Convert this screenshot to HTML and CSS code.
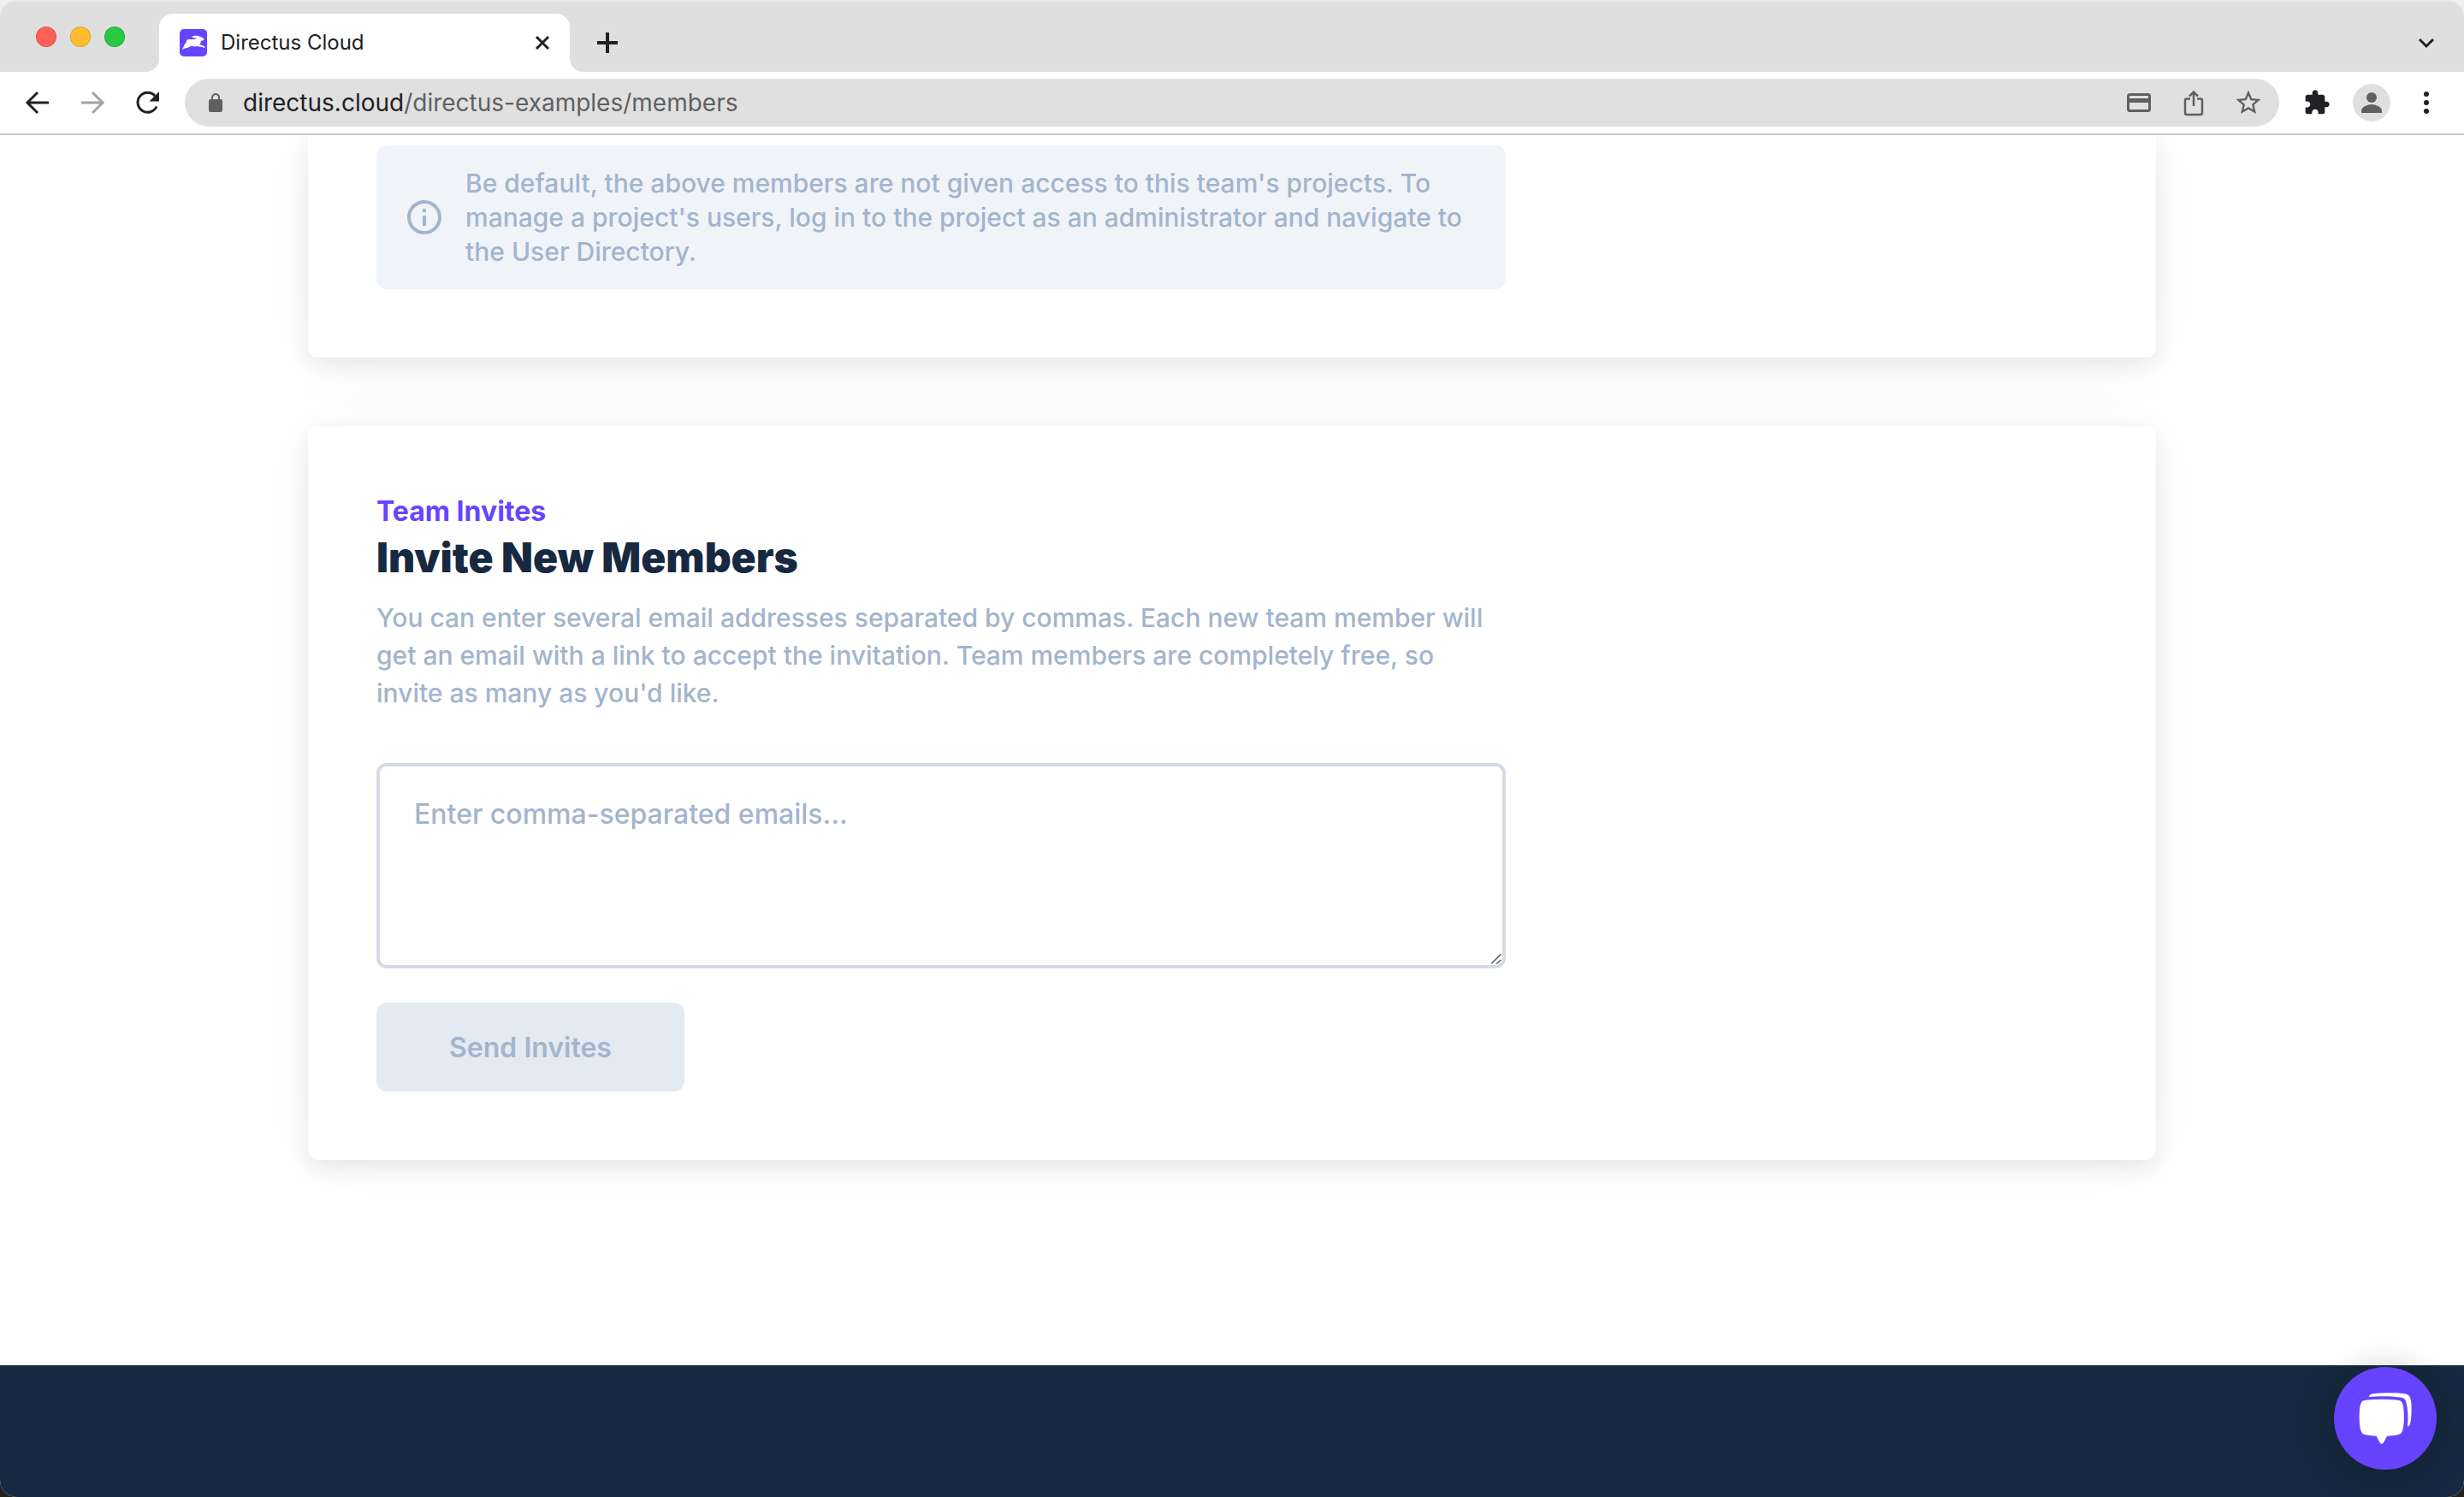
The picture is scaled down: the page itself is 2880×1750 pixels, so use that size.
FILE: index.html
```html
<!DOCTYPE html>
<html lang="en">
<head>
<meta charset="utf-8">
<title>Directus Cloud</title>
<meta name="viewport" content="width=device-width, initial-scale=1">
<link rel="stylesheet" href="styles.css">
</head>
<body>
<div class="window">
  <header class="browser">
    <div class="tabstrip">
      <div class="lights">
        <span class="light light-close"></span>
        <span class="light light-min"></span>
        <span class="light light-max"></span>
      </div>
      <div class="tab">
        <svg class="favicon" viewBox="0 0 32 32" aria-hidden="true">
          <rect width="32" height="32" rx="5" fill="#6644ff"/>
          <path fill="#fff" d="M14 9c3-2 8-1.500 11 .3 1.500.6 3 1.200 3.600 2.700-.6 1.300-2 1.700-3.600 1.800-.2 1.500-.8 3-1.600 4.200 1.500.6 3.600 1 5.400 2.300.8.600.6 1.500 0 1.900-2-1.500-4.500-1.700-7.300-1.900l-1.800-.3c-1.600.8-3.600.2-5.200-.3-1.700-.2-3.200 1-4.700 2-2 .6-3.800.6-5.300 1.400-.4.600-1 1.100-1.700.8l.4-1.200c1.600-1.500 1.800-3.600 3-5.400.8-1.100 1.800-1.800 1.700-3.300l.6-1.500c2.600-1 5.500-.2 8-.5 1.300-.1 2.400-.6 3.500-1.300-2-.4-4.500-.4-6-1.700z"/>
        </svg>
        <span class="tab-title">Directus Cloud</span>
        <button class="icon-button" type="button" aria-label="Close tab">
          <svg viewBox="0 0 32 32"><path d="M9 9l14 14M23 9L9 23" fill="none" stroke="currentColor" stroke-width="3"/></svg>
        </button>
      </div>
      <button class="icon-button new-tab" type="button" aria-label="New tab">
        <svg viewBox="0 0 32 32"><path d="M16 4v24M4 16h24" fill="none" stroke="currentColor" stroke-width="4"/></svg>
      </button>
      <button class="icon-button tab-search" type="button" aria-label="Search tabs">
        <svg viewBox="0 0 32 32"><path d="M8 12l8 8 8-8" fill="none" stroke="currentColor" stroke-width="3"/></svg>
      </button>
    </div>
    <nav class="toolbar" aria-label="Browser">
      <div class="nav-buttons">
        <button class="icon-button" type="button" aria-label="Back">
          <svg viewBox="0 0 32 32"><path d="M29 16H5M16 4L4 16l12 12" fill="none" stroke="currentColor" stroke-width="3"/></svg>
        </button>
        <button class="icon-button" type="button" aria-label="Forward" disabled>
          <svg viewBox="0 0 32 32"><path d="M3 16h24M16 4l12 12-12 12" fill="none" stroke="currentColor" stroke-width="3"/></svg>
        </button>
        <button class="icon-button" type="button" aria-label="Reload">
          <svg viewBox="0 0 32 32"><path d="M27 20.500A11.500 11.500 0 1 1 25 8" fill="none" stroke="currentColor" stroke-width="3"/><path d="M30 3v11.500H18.500z" fill="currentColor"/></svg>
        </button>
      </div>
      <div class="address">
        <svg class="lock" viewBox="0 0 16 22" aria-hidden="true"><rect y="7" width="16" height="15" rx="2" fill="currentColor"/><path d="M4 8V5a4 4 0 0 1 8 0v3" fill="none" stroke="currentColor" stroke-width="2"/></svg>
        <div class="url" role="textbox" aria-label="Address"><span class="host">directus.cloud</span>/directus-examples/members</div>
        <div class="address-actions">
          <button class="icon-button" type="button" aria-label="Payment methods">
            <svg viewBox="0 0 32 32"><rect x="3.500" y="6.500" width="25" height="19" rx="2" fill="none" stroke="currentColor" stroke-width="3"/><path d="M3 11h26v5H3z" fill="currentColor"/></svg>
          </button>
          <button class="icon-button" type="button" aria-label="Share">
            <svg viewBox="0 0 32 32"><path d="M12 11.500H8a2 2 0 0 0-2 2V28a2 2 0 0 0 2 2h16a2 2 0 0 0 2-2V13.500a2 2 0 0 0-2-2h-4M16 20V4M11 8.500l5-5 5 5" fill="none" stroke="currentColor" stroke-width="2.500"/></svg>
          </button>
          <button class="icon-button" type="button" aria-label="Bookmark this page">
            <svg viewBox="1 1 22 22"><path fill="currentColor" d="M22 9.240l-7.190-.620L12 2 9.190 8.630 2 9.240l5.460 4.730L5.820 21 12 17.270 18.180 21l-1.630-7.030L22 9.240zM12 15.400l-3.760 2.270 1-4.280-3.320-2.880 4.380-.380L12 6.100l1.710 4.040 4.380.380-3.320 2.880 1 4.280L12 15.400z"/></svg>
          </button>
        </div>
      </div>
      <div class="browser-actions">
        <button class="icon-button" type="button" aria-label="Extensions">
          <svg viewBox="0 0 24 24"><path fill="currentColor" d="M20.500 11H19V7c0-1.100-.9-2-2-2h-4V3.500C13 2.120 11.880 1 10.500 1S8 2.120 8 3.500V5H4c-1.100 0-1.990.9-1.990 2v3.800H3.500c1.490 0 2.700 1.210 2.700 2.700s-1.210 2.700-2.700 2.700H2V20c0 1.100.9 2 2 2h3.800v-1.500c0-1.490 1.210-2.700 2.700-2.700 1.490 0 2.700 1.210 2.700 2.700V22H17c1.100 0 2-.9 2-2v-4h1.500c1.380 0 2.500-1.120 2.500-2.500S21.880 11 20.500 11z"/></svg>
        </button>
        <button class="avatar" type="button" aria-label="Profile">
          <svg viewBox="0 0 44 44"><circle cx="22" cy="16" r="6" fill="currentColor"/><path d="M10 34v-3c0-4 8-7 12-7s12 3 12 7v3z" fill="currentColor"/></svg>
        </button>
        <button class="icon-button" type="button" aria-label="Menu">
          <svg viewBox="0 0 32 32"><g fill="currentColor"><circle cx="16" cy="6" r="3"/><circle cx="16" cy="16" r="3"/><circle cx="16" cy="26" r="3"/></g></svg>
        </button>
      </div>
    </nav>
  </header>

  <main class="page">
    <section class="card card-members">
      <div class="notice">
        <svg class="notice-icon" viewBox="0 0 24 24" aria-hidden="true"><path fill="currentColor" d="M11 7h2v2h-2zm0 4h2v6h-2zm1-9C6.480 2 2 6.480 2 12s4.480 10 10 10 10-4.480 10-10S17.520 2 12 2zm0 18c-4.410 0-8-3.590-8-8s3.590-8 8-8 8 3.590 8 8-3.590 8-8 8z"/></svg>
        <p class="notice-text">Be default, the above members are not given access to this team's projects. To manage a project's users, log in to the project as an administrator and navigate to the User Directory.</p>
      </div>
    </section>

    <section class="card">
      <form class="invite">
        <p class="eyebrow">Team Invites</p>
        <h2 class="heading"><label for="emails">Invite New Members</label></h2>
        <p class="description">You can enter several email addresses separated by commas. Each new team member will get an email with a link to accept the invitation. Team members are completely free, so invite as many as you'd like.</p>
        <textarea class="emails" id="emails" placeholder="Enter comma-separated emails..."></textarea>
        <button class="send" type="submit" disabled>Send Invites</button>
      </form>
    </section>
  </main>

  <footer class="footer"></footer>

  <button class="chat" type="button" aria-label="Open chat">
    <svg viewBox="0 0 120 120"><g fill="#fff"><path d="M34 40.500c8-2.200 36-2.200 43.500 0 4.500 3 4.500 32 0 36.500-4 2-10 2.300-16 2.700l-4.500 8.300q-1.200 1.800-2.400 0l-4.600-8.300c-6-.4-12-.7-16-2.700-4.500-4.500-4.500-33.500 0-36.500z" stroke="#fff" stroke-width="2" stroke-linejoin="round"/><path d="M41 35c0-3.500 4-4 14-4.500 10-.4 22-.4 29 1 4 1 5.500 4 6.200 9 1 10 .3 19-.7 24-.8 4-2 5-3.500 5 1-10 .5-20-1.500-28-1-4-3-5.500-7-6-11-1.500-26-1.500-36.500-.5z"/></g></svg>
  </button>
</div>
</body>
</html>
```
FILE: styles.css
```css
*,
*::before,
*::after {
  box-sizing: border-box;
}

body {
  margin: 0;
  background: linear-gradient(#f0f0f0 50%, #26241f 50%);
  font-family: Inter, "Liberation Sans", sans-serif;
  color: #172940;
}

p,
h2 {
  margin: 0;
}

button {
  padding: 0;
  border: 0;
  background: none;
  font: inherit;
  color: inherit;
}

svg {
  display: block;
}

.window {
  display: flex;
  flex-direction: column;
  min-height: 100vh;
  overflow: hidden;
  border-radius: 20px;
  background: #fff;
}

/* Browser chrome */

.browser {
  position: relative;
  z-index: 1;
  border-bottom: 2px solid #c8c8c8;
  background: #fff;
  color: #202124;
}

.tabstrip {
  display: flex;
  align-items: center;
  height: 84px;
  padding: 16px 28px 0 42px;
  background: #dfdfdf;
  box-shadow: inset 0 2px #e8e8e8;
}

.lights {
  display: flex;
  align-self: flex-start;
  gap: 16px;
  margin-top: 15px;
}

.light {
  width: 24px;
  height: 24px;
  border: 1px solid rgb(0 0 0 / 12%);
  border-radius: 50%;
}

.light-close { background: #ff5f57; }
.light-min { background: #febc2e; }
.light-max { background: #28c840; }

.tab {
  position: relative;
  display: flex;
  align-items: center;
  gap: 16px;
  width: 480px;
  height: 100%;
  margin-left: 40px;
  padding: 0 16px 0 24px;
  border-radius: 16px 16px 0 0;
  background: #fff;
}

.tab::before,
.tab::after {
  content: "";
  position: absolute;
  bottom: 0;
  width: 16px;
  height: 16px;
}

.tab::before {
  right: 100%;
  background: radial-gradient(circle at 0 0, transparent 16px, #fff 16px);
}

.tab::after {
  left: 100%;
  background: radial-gradient(circle at 100% 0, transparent 16px, #fff 16px);
}

.favicon {
  width: 32px;
  height: 32px;
}

.tab-title {
  flex: 1;
  font-size: 24px;
  line-height: 32px;
}

.icon-button {
  flex: none;
  width: 32px;
  height: 32px;
}

.icon-button:disabled {
  color: #a2a3a5;
}

.new-tab {
  margin-left: 28px;
}

.tab-search {
  margin-left: auto;
}

.toolbar {
  display: flex;
  align-items: center;
  height: 72px;
  padding: 0 28px;
}

.nav-buttons,
.address-actions,
.browser-actions {
  display: flex;
  align-items: center;
  gap: 32px;
}

.address {
  display: flex;
  flex: 1;
  align-items: center;
  height: 56px;
  margin: 0 28px;
  padding: 0 20px 0 28px;
  border-radius: 28px;
  background: #e0e0e0;
  color: #5f6062;
}

.lock {
  width: 16px;
  height: 22px;
}

.url {
  flex: 1;
  margin-left: 24px;
  font-size: 28px;
  line-height: 40px;
}

.host {
  color: #202124;
}

.browser-actions {
  gap: 26px;
}

.avatar {
  width: 44px;
  height: 44px;
  border-radius: 50%;
  background: #dfdfdf;
  color: #5f6062;
}

/* Page */

.page {
  display: flex;
  flex-direction: column;
  gap: 80px;
  width: 75%;
  margin: 0 auto;
  padding-bottom: 240px;
}

.card {
  padding: 80px;
  border-radius: 12px;
  background: #fff;
  box-shadow:
    0 10px 24px rgb(23 41 64 / 9%),
    0 0 100px rgb(23 41 64 / 4%);
}

.card-members {
  padding-top: 12px;
  border-radius: 0 0 12px 12px;
}

.notice,
.invite {
  max-width: 1320px;
}

.notice {
  display: flex;
  align-items: center;
  gap: 24px;
  padding: 24px 32px;
  border-radius: 12px;
  background: #f0f4f9;
  color: #a2b5cd;
}

.notice-icon {
  flex: none;
  width: 48px;
  height: 48px;
}

.notice-text {
  font-size: 30px;
  font-weight: 500;
  line-height: 40px;
}

.eyebrow {
  color: #6644ff;
  font-size: 32px;
  font-weight: 700;
  line-height: 40px;
}

.heading {
  font-size: 48px;
  font-weight: 900;
  line-height: 68px;
}

.description {
  margin-top: 14px;
  color: #a2b5cd;
  font-size: 30px;
  font-weight: 500;
  line-height: 44px;
}

.emails {
  display: block;
  width: 100%;
  height: 240px;
  margin: 60px 0 40px;
  padding: 36px 40px;
  border: 4px solid #d5dae7;
  border-radius: 12px;
  outline: 0;
  background: #fff;
  color: #172940;
  font: 500 32px/40px Inter, "Liberation Sans", sans-serif;
  resize: vertical;
}

.emails::placeholder {
  color: #a2b5cd;
  opacity: 1;
}

.emails::-webkit-scrollbar {
  width: 20px;
  height: 20px;
}

.emails::-webkit-resizer {
  background: url("data:image/svg+xml,%3Csvg xmlns='http://www.w3.org/2000/svg' viewBox='0 0 20 20'%3E%3Cpath d='M3 18L18 3M11 18l7-6' fill='none' stroke='%23555' stroke-width='2'/%3E%3C/svg%3E") center / 100% no-repeat;
}

.send {
  display: block;
  width: 360px;
  height: 104px;
  border-radius: 12px;
  background: #e4eaf2;
  color: #a2b5cd;
  font-size: 32px;
  font-weight: 600;
}

.footer {
  flex: 1;
  min-height: 120px;
  background: #172940;
}

.chat {
  position: fixed;
  right: 32px;
  bottom: 32px;
  width: 120px;
  height: 120px;
  border-radius: 50%;
  background: #6644ff;
  box-shadow: 0 4px 40px rgb(0 0 0 / 25%);
}
```
